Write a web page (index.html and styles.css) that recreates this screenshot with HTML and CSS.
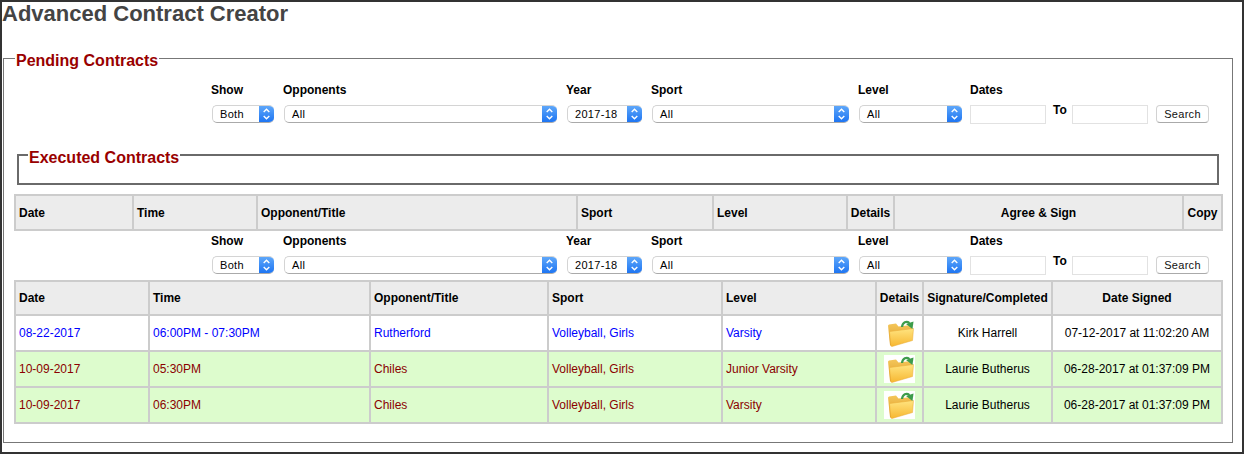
FILE: index.html
```html
<!DOCTYPE html>
<html lang="en">
<head>
<meta charset="utf-8">
<title>Advanced Contract Creator</title>
<link rel="stylesheet" href="styles.css">
</head>
<body>
<svg class="defs" width="0" height="0" aria-hidden="true">
  <defs>
    <linearGradient id="fold" x1="0" y1="0" x2="0" y2="1"><stop offset="0" stop-color="#ffe480"/><stop offset="1" stop-color="#f7b731"/></linearGradient>
    <linearGradient id="back" x1="0" y1="0" x2="0" y2="1"><stop offset="0" stop-color="#f4c65a"/><stop offset="1" stop-color="#dc9a24"/></linearGradient>
    <symbol id="folder" viewBox="0 0 26 28">
      <path d="M0 6.500 1 5.500 8 4.500 10.500 7.500 23 6 24 7.500 24 20 4 27 2 26z" fill="url(#back)"/>
      <path d="M1.500 12.500 25.500 9.500 24.500 21.500 4 27.500 2.800 27z" fill="url(#fold)" stroke="#e9aa35" stroke-width=".5"/>
      <path d="M14 8C14.500 3 18.500 1.500 21.500 4" fill="none" stroke="#3d9c4b" stroke-width="2.200"/>
      <path d="M18 5 25.500 2.500 24.500 10z" fill="#3d9c4b"/>
    </symbol>
    <symbol id="updown" viewBox="0 0 14 18">
      <path d="M4.200 7 7 4.300 9.800 7M4.200 11 7 13.700 9.800 11" fill="none" stroke="#fff" stroke-width="1.400"/>
    </symbol>
  </defs>
</svg>
<main class="frame">
  <h1 class="title">Advanced Contract Creator</h1>
  <fieldset class="pending">
    <legend class="legend">Pending Contracts</legend>
    <div class="filters">
      <span class="label">Show</span><span class="label">Opponents</span><span class="label">Year</span><span class="label">Sport</span><span class="label">Level</span><span class="label">Dates</span><span></span><span></span><span></span>
      <div class="select sel-show"><span>Both</span><span class="arrow"><svg><use href="#updown"/></svg></span></div>
      <div class="select sel-opp"><span>All</span><span class="arrow"><svg><use href="#updown"/></svg></span></div>
      <div class="select sel-year"><span>2017-18</span><span class="arrow"><svg><use href="#updown"/></svg></span></div>
      <div class="select sel-sport"><span>All</span><span class="arrow"><svg><use href="#updown"/></svg></span></div>
      <div class="select sel-level"><span>All</span><span class="arrow"><svg><use href="#updown"/></svg></span></div>
      <input class="date" type="text" aria-label="From date">
      <span class="label to">To</span>
      <input class="date" type="text" aria-label="To date">
      <button class="search" type="button">Search</button>
    </div>
    <fieldset class="executed">
      <legend class="legend">Executed Contracts</legend>
    </fieldset>
    <table class="grid grid-a">
      <colgroup><col class="a1"><col class="a2"><col class="a3"><col class="a4"><col class="a5"><col class="a6"><col class="a7"><col class="a8"></colgroup>
      <thead><tr><th>Date</th><th>Time</th><th>Opponent/Title</th><th>Sport</th><th>Level</th><th class="mid">Details</th><th class="mid">Agree &amp; Sign</th><th class="mid">Copy</th></tr></thead>
    </table>
    <div class="filters filters-b">
      <span class="label">Show</span><span class="label">Opponents</span><span class="label">Year</span><span class="label">Sport</span><span class="label">Level</span><span class="label">Dates</span><span></span><span></span><span></span>
      <div class="select sel-show"><span>Both</span><span class="arrow"><svg><use href="#updown"/></svg></span></div>
      <div class="select sel-opp"><span>All</span><span class="arrow"><svg><use href="#updown"/></svg></span></div>
      <div class="select sel-year"><span>2017-18</span><span class="arrow"><svg><use href="#updown"/></svg></span></div>
      <div class="select sel-sport"><span>All</span><span class="arrow"><svg><use href="#updown"/></svg></span></div>
      <div class="select sel-level"><span>All</span><span class="arrow"><svg><use href="#updown"/></svg></span></div>
      <input class="date" type="text" aria-label="From date">
      <span class="label to">To</span>
      <input class="date" type="text" aria-label="To date">
      <button class="search" type="button">Search</button>
    </div>
    <table class="grid grid-b">
      <colgroup><col class="b1"><col class="b2"><col class="b3"><col class="b4"><col class="b5"><col class="b6"><col class="b7"><col class="b8"></colgroup>
      <thead><tr><th>Date</th><th>Time</th><th>Opponent/Title</th><th>Sport</th><th>Level</th><th class="mid">Details</th><th class="mid">Signature/Completed</th><th class="mid">Date Signed</th></tr></thead>
      <tbody>
        <tr class="open"><td>08-22-2017</td><td>06:00PM - 07:30PM</td><td>Rutherford</td><td>Volleyball, Girls</td><td>Varsity</td><td class="mid"><svg class="folder"><use href="#folder"/></svg></td><td class="mid sig">Kirk Harrell</td><td class="mid sig">07-12-2017 at 11:02:20 AM</td></tr>
        <tr class="done"><td>10-09-2017</td><td>05:30PM</td><td>Chiles</td><td>Volleyball, Girls</td><td>Junior Varsity</td><td class="mid"><span class="tile"><svg class="folder"><use href="#folder"/></svg></span></td><td class="mid sig">Laurie Butherus</td><td class="mid sig">06-28-2017 at 01:37:09 PM</td></tr>
        <tr class="done"><td>10-09-2017</td><td>06:30PM</td><td>Chiles</td><td>Volleyball, Girls</td><td>Varsity</td><td class="mid"><span class="tile"><svg class="folder"><use href="#folder"/></svg></span></td><td class="mid sig">Laurie Butherus</td><td class="mid sig">06-28-2017 at 01:37:09 PM</td></tr>
      </tbody>
    </table>
  </fieldset>
</main>
</body>
</html>
```
FILE: styles.css
```css
* { box-sizing: border-box; }
html, body { margin: 0; padding: 0; background: #fff; }
body { font-family: "Liberation Sans", Arial, sans-serif; font-size: 12px; color: #000; }
.defs { position: absolute; }
.frame { width: 1244px; height: 454px; border: 2px solid #333; overflow: hidden; }
.title { margin: 0; padding: 0; height: 44px; font-size: 22px; line-height: 24px; font-weight: bold; color: #444; }
.pending { margin: 0 9px 0 1px; padding: 0 9px 0 10px; min-width: 0; height: 397px; border: 1px solid #777; }
.legend { padding: 6px 1px 0; margin-left: 1px; font-size: 16px; line-height: 18px; font-weight: bold; color: #990000; }
.filters { display: grid; grid-template-columns: 72px 283px 85px 207px 112px 82px 20px 84px 53px; grid-template-rows: 16px 18px; row-gap: 7px; margin-left: 197px; padding-top: 12px; align-items: start; }
.filters-b { padding-top: 2px; }
.label { font-weight: bold; font-size: 12px; line-height: 16px; }
.to { margin-left: 1px; line-height: 10px; }
.select { display: flex; justify-content: space-between; align-items: center; height: 18px; margin-left: 1px; padding-left: 7px; font-size: 11px; letter-spacing: .3px; background: #fff; border: 1px solid #d4d4d4; border-bottom-color: #aaa; border-right: 0; border-radius: 5px; overflow: hidden; }
.arrow { display: block; width: 15px; height: 18px; margin-top: -1px; background: linear-gradient(#62aafa, #1a72f2); }
.arrow svg { display: block; width: 15px; height: 18px; }
.sel-show { width: 62px; }
.sel-opp { width: 273px; }
.sel-year { width: 75px; }
.sel-sport { width: 197px; }
.sel-level { width: 103px; }
.date { display: block; width: 76px; height: 19px; padding: 0; margin: 0; border: 1px solid #e2e2e2; background: #fff; }
.search { display: block; width: 53px; height: 18px; padding: 0; font: 11px "Liberation Sans", Arial, sans-serif; letter-spacing: .3px; color: #111; background: #fff; border: 1px solid #d2d2d2; border-bottom-color: #aaa; border-radius: 4px; }
.executed { margin: 20px 4px 0 3px; padding: 0; height: 42px; min-width: 0; border: 2px solid #6a6a6a; }
.executed .legend { margin-left: 9px; }
.grid { table-layout: fixed; border-collapse: collapse; width: 1209px; }
.grid th, .grid td { border: 2px solid #ccc; padding: 0 0 0 3px; text-align: left; font-size: 12px; overflow: hidden; white-space: nowrap; }
.grid th { background: #ececec; font-weight: bold; }
.grid .mid { text-align: center; padding: 0; }
.grid-a { margin-top: 9px; }
.grid-a th { height: 35px; }
.grid-b { margin-top: 6px; }
.grid-b th { height: 34px; }
.grid-b td { height: 36px; }
.a1 { width: 118px; } .a2 { width: 124px; } .a3 { width: 320px; } .a4 { width: 136px; }
.a5 { width: 134px; } .a6 { width: 47px; } .a7 { width: 289px; } .a8 { width: 39px; }
.b1 { width: 134px; } .b2 { width: 221px; } .b3 { width: 178px; } .b4 { width: 174px; }
.b5 { width: 154px; } .b6 { width: 47px; } .b7 { width: 129px; } .b8 { width: 170px; }
.open td { background: #fff; color: #0000ff; }
.done td { background: #ddfccd; color: #8b0000; }
.grid .sig { color: #000; }
.folder { display: block; width: 26px; height: 28px; margin: 0 0 0 11px; }
.tile { display: block; width: 31px; height: 28px; margin: 0 auto; padding-left: 4px; background: #fff; overflow: hidden; }
.tile .folder { margin: 0; }
```
